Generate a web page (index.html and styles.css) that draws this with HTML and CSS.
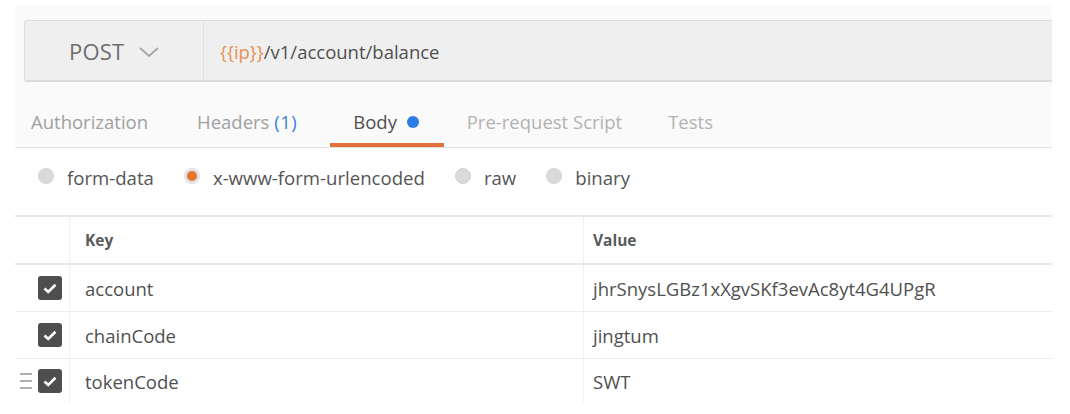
FILE: index.html
```html
<!DOCTYPE html>
<html>
<head>
<meta charset="utf-8">
<link rel="stylesheet" href="styles.css">
</head>
<body>
<div class="app">
  <div class="top">
    <div class="urlbar">
      <div class="method">
        <span class="method-name">POST</span>
        <svg class="chev" width="20" height="10" viewBox="0 0 20 10"><path d="M1 1 L10 9 L19 1" fill="none" stroke="#a6a6a6" stroke-width="1.8"/></svg>
      </div>
      <div class="url"><span class="var">{{ip}}</span>/v1/account/balance</div>
    </div>
    <div class="tabs">
      <div class="tab first">Authorization</div>
      <div class="tab">Headers <span class="count">(1)</span></div>
      <div class="tab active">Body <span class="dot"></span></div>
      <div class="tab light">Pre-request Script</div>
      <div class="tab light">Tests</div>
    </div>
  </div>
  <div class="radios">
    <label class="radio"><span class="circle"></span>form-data</label>
    <label class="radio"><span class="circle on"></span>x-www-form-urlencoded</label>
    <label class="radio"><span class="circle"></span>raw</label>
    <label class="radio"><span class="circle"></span>binary</label>
  </div>
  <div class="table">
    <div class="row head">
      <div class="c-check"></div>
      <div class="c-key">Key</div>
      <div class="c-val">Value</div>
    </div>
    <div class="row">
      <div class="c-check"><span class="cb"><svg width="14" height="11" viewBox="0 0 14 11"><path d="M1.5 5.5 L5.2 9 L12.5 1.8" fill="none" stroke="#fff" stroke-width="2.6"/></svg></span></div>
      <div class="c-key">account</div>
      <div class="c-val">jhrSnysLGBz1xXgvSKf3evAc8yt4G4UPgR</div>
    </div>
    <div class="row">
      <div class="c-check"><span class="cb"><svg width="14" height="11" viewBox="0 0 14 11"><path d="M1.5 5.5 L5.2 9 L12.5 1.8" fill="none" stroke="#fff" stroke-width="2.6"/></svg></span></div>
      <div class="c-key">chainCode</div>
      <div class="c-val">jingtum</div>
    </div>
    <div class="row last">
      <div class="c-check"><span class="drag"><i></i><i></i><i></i></span><span class="cb"><svg width="14" height="11" viewBox="0 0 14 11"><path d="M1.5 5.5 L5.2 9 L12.5 1.8" fill="none" stroke="#fff" stroke-width="2.6"/></svg></span></div>
      <div class="c-key">tokenCode</div>
      <div class="c-val">SWT</div>
    </div>
  </div>
</div>
</body>
</html>
```
FILE: styles.css
```css
* { box-sizing: border-box; }
html, body { margin: 0; padding: 0; background: #fff; }
body { font-family: "Open Sans", "Liberation Sans", sans-serif; font-size: 18.5px; color: #505050; }

.app { margin: 5px 0 0 15px; width: 1037px; }

.top { background: #fafafa; padding-top: 15px; border-bottom: 1px solid #e3e3e3; }

.urlbar {
  margin-left: 9px;
  height: 62px;
  display: flex;
  background: #efefef;
  border: 1px solid #dcdcdc;
  border-right: none;
  border-bottom: 2px solid #dcdcdc;
  border-radius: 3px 0 0 3px;
}
.method {
  width: 179px;
  display: flex;
  align-items: center;
  padding-left: 44px;
  border-right: 1px solid #e0e0e0;
}
.method-name { font-size: 22px; color: #6e6e6e; letter-spacing: 0.2px; }
.chev { margin-left: 15px; margin-top: 2px; }
.url { display: flex; align-items: center; padding-left: 16px; padding-top: 2px; color: #4f4f4f; }
.var { color: #e99152; }

.tabs { display: flex; padding-top: 18px; }
.tab {
  height: 47px;
  line-height: 44px;
  padding: 0 23px;
  border-bottom: 4px solid transparent;
  color: #a0a0a0;
  white-space: nowrap;
}
.tab.first { padding-left: 16px; padding-right: 26px; }
.tab.light { color: #b3b3b3; }
.tab.active { color: #4f4f4f; border-bottom-color: #e2703a; margin-left: 10px; padding-right: 25px; }
.count { color: #3b82d4; letter-spacing: 0.5px; }
.dot { display: inline-block; width: 12px; height: 12px; border-radius: 50%; background: #2b7be4; margin-left: 5px; vertical-align: 1px; }

.radios { display: flex; align-items: center; height: 67px; padding-left: 23px; padding-bottom: 8px; font-size: 18.6px; }
.radio { display: flex; align-items: center; margin-right: 30px; color: #555; }
.circle {
  width: 16px; height: 16px; border-radius: 50%;
  background: #dadada; border: 1px solid #d2d2d2;
  margin-right: 13px; margin-top: -3px;
}
.circle.on { background: #e8742f; border: 3px solid #e3e3e3; }

.table { border-top: 2px solid #e8e8e8; }
.row { display: flex; height: 47px; border-bottom: 1px solid #ececec; }
.row.head { height: 48px; border-bottom: 2px solid #e8e8e8; font-size: 15.5px; font-weight: 700; color: #5a5a5a; }
.row.last { border-bottom: none; height: 44px; }
.c-check { width: 55px; display: flex; align-items: center; justify-content: flex-end; padding-right: 7px; border-right: 1px solid #f1f1f1; }
.c-key { width: 514px; display: flex; align-items: center; padding-left: 15px; border-right: 1px solid #f1f1f1; }
.c-val { flex: 1; display: flex; align-items: center; padding-left: 9px; }
.cb { width: 24px; height: 24px; border-radius: 3px; background: #4e4e4e; display: flex; align-items: center; justify-content: center; }
.drag { display: flex; flex-direction: column; justify-content: space-between; width: 12px; height: 16px; margin-right: 6px; }
.drag i { display: block; height: 2px; background: #b0b0b0; }
```
